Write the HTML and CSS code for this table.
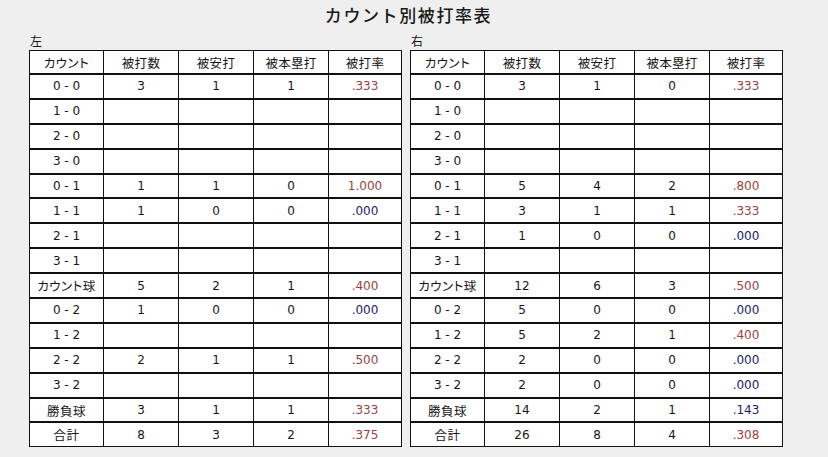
FILE: index.html
```html
<!DOCTYPE html>
<html lang="ja">
<head>
<meta charset="utf-8">
<title>カウント別被打率表</title>
<link rel="stylesheet" href="styles.css">
</head>
<body>
<div class="page">
  <h1 class="title">カウント別被打率表</h1>
  <div class="tables">
    <section class="side">
      <div class="label">左</div>
      <table class="stats">
        <colgroup><col class="c1"><col class="c2"><col class="c3"><col class="c4"><col class="c5"></colgroup>
        <thead>
          <tr><th class="kana">カウント</th><th>被打数</th><th>被安打</th><th>被本塁打</th><th>被打率</th></tr>
        </thead>
        <tbody>
          <tr><td>0 - 0</td><td>3</td><td>1</td><td>1</td><td class="hi">.333</td></tr>
          <tr><td>1 - 0</td><td></td><td></td><td></td><td></td></tr>
          <tr><td>2 - 0</td><td></td><td></td><td></td><td></td></tr>
          <tr><td>3 - 0</td><td></td><td></td><td></td><td></td></tr>
          <tr><td>0 - 1</td><td>1</td><td>1</td><td>0</td><td class="hi">1.000</td></tr>
          <tr><td>1 - 1</td><td>1</td><td>0</td><td>0</td><td class="lo">.000</td></tr>
          <tr><td>2 - 1</td><td></td><td></td><td></td><td></td></tr>
          <tr><td>3 - 1</td><td></td><td></td><td></td><td></td></tr>
          <tr><td class="kana">カウント球</td><td>5</td><td>2</td><td>1</td><td class="hi">.400</td></tr>
          <tr><td>0 - 2</td><td>1</td><td>0</td><td>0</td><td class="lo">.000</td></tr>
          <tr><td>1 - 2</td><td></td><td></td><td></td><td></td></tr>
          <tr><td>2 - 2</td><td>2</td><td>1</td><td>1</td><td class="hi">.500</td></tr>
          <tr><td>3 - 2</td><td></td><td></td><td></td><td></td></tr>
          <tr><td class="kana">勝負球</td><td>3</td><td>1</td><td>1</td><td class="hi">.333</td></tr>
          <tr><td class="kana">合計</td><td>8</td><td>3</td><td>2</td><td class="hi">.375</td></tr>
        </tbody>
      </table>
    </section>
    <section class="side">
      <div class="label">右</div>
      <table class="stats">
        <colgroup><col class="c1"><col class="c2"><col class="c3"><col class="c4"><col class="c5"></colgroup>
        <thead>
          <tr><th class="kana">カウント</th><th>被打数</th><th>被安打</th><th>被本塁打</th><th>被打率</th></tr>
        </thead>
        <tbody>
          <tr><td>0 - 0</td><td>3</td><td>1</td><td>0</td><td class="hi">.333</td></tr>
          <tr><td>1 - 0</td><td></td><td></td><td></td><td></td></tr>
          <tr><td>2 - 0</td><td></td><td></td><td></td><td></td></tr>
          <tr><td>3 - 0</td><td></td><td></td><td></td><td></td></tr>
          <tr><td>0 - 1</td><td>5</td><td>4</td><td>2</td><td class="hi">.800</td></tr>
          <tr><td>1 - 1</td><td>3</td><td>1</td><td>1</td><td class="hi">.333</td></tr>
          <tr><td>2 - 1</td><td>1</td><td>0</td><td>0</td><td class="lo">.000</td></tr>
          <tr><td>3 - 1</td><td></td><td></td><td></td><td></td></tr>
          <tr><td class="kana">カウント球</td><td>12</td><td>6</td><td>3</td><td class="hi">.500</td></tr>
          <tr><td>0 - 2</td><td>5</td><td>0</td><td>0</td><td class="lo">.000</td></tr>
          <tr><td>1 - 2</td><td>5</td><td>2</td><td>1</td><td class="hi">.400</td></tr>
          <tr><td>2 - 2</td><td>2</td><td>0</td><td>0</td><td class="lo">.000</td></tr>
          <tr><td>3 - 2</td><td>2</td><td>0</td><td>0</td><td class="lo">.000</td></tr>
          <tr><td class="kana">勝負球</td><td>14</td><td>2</td><td>1</td><td class="lo">.143</td></tr>
          <tr><td class="kana">合計</td><td>26</td><td>8</td><td>4</td><td class="hi">.308</td></tr>
        </tbody>
      </table>
    </section>
  </div>
</div>
</body>
</html>
```

FILE: styles.css
```css
html, body {
  margin: 0;
  padding: 0;
  background: #efefef;
}
body {
  font-family: "Noto Sans CJK JP", "Noto Sans", sans-serif;
  color: #151515;
  width: 828px;
  height: 457px;
  overflow: hidden;
}
.page {
  padding: 0 0 0 29px;
}
.title {
  margin: 0;
  height: 30px;
  line-height: 29px;
  font-size: 17px;
  font-weight: 500;
  letter-spacing: 1.6px;
  text-align: center;
  width: 751px;
  padding-left: 4px;
  color: #1a1a1a;
}
.tables {
  display: flex;
  gap: 8px;
  align-items: flex-start;
}
.label {
  font-size: 12px;
  height: 20px;
  line-height: 22px;
  padding-left: 1px;
}
.stats {
  border-collapse: collapse;
  table-layout: fixed;
  width: 372px;
  background: #fff;
  font-family: "DejaVu Sans", "Noto Sans CJK JP", sans-serif;
  font-size: 12px;
}
.c1 { width: 74px; }
.c2 { width: 75px; }
.c3 { width: 75px; }
.c4 { width: 75px; }
.c5 { width: 73px; }
.stats th,
.stats td {
  border: 1px solid #111;
  border-top-width: 2px;
  padding: 0;
  text-align: center;
  vertical-align: middle;
  font-weight: 400;
  white-space: nowrap;
}
.stats thead th {
  border-top-width: 1px;
  height: 22px;
  font-family: "Noto Sans CJK JP", sans-serif;
  font-size: 12.5px;
}
.stats tbody td {
  height: 22.9px;
}
.stats tbody tr:last-child td {
  border-bottom-width: 1px;
}
.stats .kana {
  font-family: "Noto Sans CJK JP", sans-serif;
  font-size: 12.5px;
  font-feature-settings: "palt";
  letter-spacing: 0.5px;
}
.stats thead th:not(.kana) {
  letter-spacing: 0.3px;
}
.hi { color: #9a4242; }
.lo { color: #1a1b6a; }
```
